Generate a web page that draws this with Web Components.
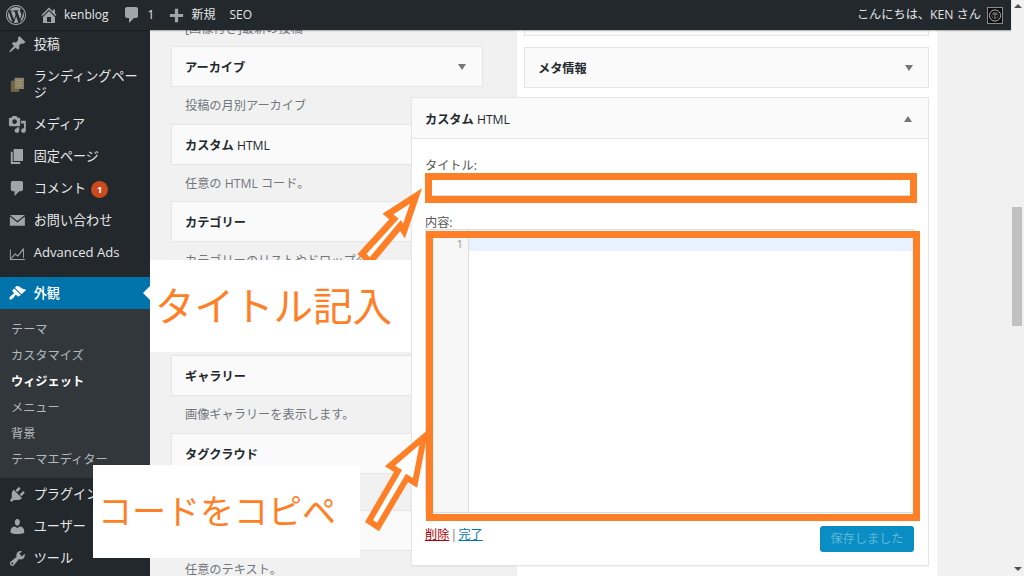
<!DOCTYPE html>
<html lang="ja">
<head>
<meta charset="utf-8">
<title>ウィジェット</title>
<style>
html,body{margin:0;padding:0;height:100%;overflow:hidden;background:#f1f1f1}
body{font-family:"Open Sans","Noto Sans CJK JP",sans-serif;font-size:12.2px;color:#444}
</style>
</head>
<body>
<wp-app>
  <wp-topbar slot="top"></wp-topbar>
  <wp-sidebar slot="side">
    <wp-menu-item icon="pin">投稿</wp-menu-item>
    <wp-menu-item icon="landing">ランディングページ</wp-menu-item>
    <wp-menu-item icon="media">メディア</wp-menu-item>
    <wp-menu-item icon="page">固定ページ</wp-menu-item>
    <wp-menu-item icon="comment" badge="1">コメント</wp-menu-item>
    <wp-menu-item icon="mail">お問い合わせ</wp-menu-item>
    <wp-menu-item icon="chart">Advanced Ads</wp-menu-item>
    <wp-menu-item icon="brush" active>外観</wp-menu-item>
    <wp-submenu>
      <wp-sub-item>テーマ</wp-sub-item>
      <wp-sub-item>カスタマイズ</wp-sub-item>
      <wp-sub-item current>ウィジェット</wp-sub-item>
      <wp-sub-item>メニュー</wp-sub-item>
      <wp-sub-item>背景</wp-sub-item>
      <wp-sub-item>テーマエディター</wp-sub-item>
    </wp-submenu>
    <wp-menu-item icon="plugin">プラグイン</wp-menu-item>
    <wp-menu-item icon="user">ユーザー</wp-menu-item>
    <wp-menu-item icon="tools">ツール</wp-menu-item>
  </wp-sidebar>
  <wp-widgets slot="main">
    <wp-available slot="left">
      <wp-widget-desc>[画像付き]最新の投稿</wp-widget-desc>
      <wp-widget-card>アーカイブ</wp-widget-card>
      <wp-widget-desc>投稿の月別アーカイブ</wp-widget-desc>
      <wp-widget-card>カスタム <wp-latin>HTML</wp-latin></wp-widget-card>
      <wp-widget-desc>任意の HTML コード。</wp-widget-desc>
      <wp-widget-card>カテゴリー</wp-widget-card>
      <wp-widget-desc>カテゴリーのリストやドロップダ</wp-widget-desc>
      <wp-widget-card></wp-widget-card>
      <wp-widget-desc></wp-widget-desc>
      <wp-widget-card>ギャラリー</wp-widget-card>
      <wp-widget-desc>画像ギャラリーを表示します。</wp-widget-desc>
      <wp-widget-card>タグクラウド</wp-widget-card>
      <wp-widget-desc></wp-widget-desc>
      <wp-widget-card></wp-widget-card>
      <wp-widget-desc>任意のテキスト。</wp-widget-desc>
    </wp-available>
    <wp-sidebar-area slot="right">
      <wp-widget-card stub></wp-widget-card>
      <wp-widget-card wide>メタ情報</wp-widget-card>
      <wp-widget-panel>カスタム <wp-latin>HTML</wp-latin></wp-widget-panel>
    </wp-sidebar-area>
  </wp-widgets>
  <wp-scrollbar slot="scroll"></wp-scrollbar>
  <wp-annotations slot="notes"></wp-annotations>
</wp-app>
<script>
const ICONS = {
  wp:'<path d="M20 10c0-5.52-4.48-10-10-10S0 4.48 0 10s4.48 10 10 10 10-4.48 10-10zM10 1.01c4.97 0 8.99 4.02 8.99 8.99s-4.02 8.99-8.99 8.99S1.01 14.97 1.01 10 5.03 1.01 10 1.01zM8.01 14.82L4.96 6.61c.49-.03 1.05-.08 1.05-.08.43-.05.38-1.01-.06-.99 0 0-1.29.1-2.13.1-.15 0-.33 0-.52-.01 1.44-2.17 3.9-3.6 6.7-3.6 2.09 0 3.99.79 5.41 2.09-.6-.08-1.45.35-1.45 1.42 0 .66.38 1.22.79 1.88.31.54.5 1.22.5 2.21 0 1.34-1.27 4.48-1.27 4.48l-2.71-7.5c.48-.03.75-.16.75-.16.43-.05.38-1.1-.05-1.08 0 0-1.3.11-2.14.11-.78 0-2.11-.11-2.11-.11-.43-.02-.48 1.06-.05 1.08l.84.08 1.12 3.04zm6.02 2.15L16.64 10s.67-1.69.39-3.81c.63 1.14.94 2.42.94 3.81 0 2.96-1.56 5.58-3.94 6.97zM2.68 6.77L6.5 17.25c-2.67-1.3-4.47-4.08-4.47-7.25 0-1.16.2-2.23.65-3.23zm7.45 4.53l2.29 6.25c-.75.27-1.57.42-2.42.42-.72 0-1.41-.11-2.06-.3z"/>',
  home:'<path d="M16 8.5l1.53 1.53-1.06 1.06L10 4.62l-6.47 6.47-1.06-1.06L10 2.5l4 4v-2h2v4zm-6-2.46l6 5.99V18H4v-5.97zM12 17v-5H8v5h4z"/>',
  plus:'<path d="M8.3 3h3.4v5.3H17v3.4h-5.3V17H8.3v-5.3H3V8.3h5.3z"/>',
  pin:'<path d="M10.44 3.02l1.82-1.82 6.36 6.35-1.83 1.82c-1.05-.68-2.48-.57-3.41.36l-.75.75c-.92.93-1.04 2.35-.35 3.41l-1.83 1.82-2.41-2.41-2.8 2.79c-.42.42-3.38 2.71-3.8 2.29s1.86-3.39 2.28-3.81l2.79-2.79L4.1 9.36l1.83-1.82c1.05.69 2.48.57 3.4-.36l.75-.75c.93-.92 1.05-2.35.36-3.41z"/>',
  landing:'<path fill="#6e6448" d="M3 6h9v12H3z"/><path fill="#8d8468" d="M7 3h10v12H7z"/><path fill="#a39a7e" d="M9 5h6v1H9zM9 8h6v1H9zM9 11h6v1H9z"/>',
  media:'<path d="M13 11V4c0-.55-.45-1-1-1h-1.67L9 1H5L3.67 3H2c-.55 0-1 .45-1 1v7c0 .55.45 1 1 1h10c.55 0 1-.45 1-1zM7 4.5c1.38 0 2.5 1.12 2.5 2.5S8.38 9.5 7 9.5 4.5 8.38 4.5 7 5.62 4.5 7 4.5zM14 6h5v10.5c0 1.38-1.12 2.5-2.5 2.5S14 17.88 14 16.5s1.12-2.5 2.5-2.5c.17 0 .34.02.5.05V9h-3V6zm-4 8.05V13h2v3.5c0 1.38-1.12 2.5-2.5 2.5S7 17.88 7 16.5 8.12 14 9.5 14c.17 0 .34.02.5.05z"/>',
  page:'<path d="M6 15V2h10v13H6zm-1 1h8v2H3V5h2v11z"/>',
  comment:'<path d="M5 2h9c1.1 0 2 .9 2 2v7c0 1.1-.9 2-2 2h-2l-5 5v-5H5c-1.1 0-2-.9-2-2V4c0-1.1.9-2 2-2z"/>',
  mail:'<path d="M2 4.2h16L10 10.6z"/><path d="M2 5.8v10h16v-10l-8 6.4z"/>',
  chart:'<path d="M2 18V7h1v10h15v1z"/><path d="M3 16l4.5-5 3 2L16 5.5l1 .7V16h-1V8l-5.3 6.6-3-2L4 16.7z"/>',
  brush:'<path d="M14.48 11.06L7.41 3.99l1.5-1.5c.5-.56 2.3-.47 3.51.32 1.21.8 1.43 1.28 2.91 2.1 1.18.64 2.45 1.26 4.45.85zm-.71.71L6.7 4.7 4.93 6.47c-.39.39-.39 1.02 0 1.41l1.06 1.06c.39.39.39 1.03 0 1.42-.6.6-1.43 1.11-2.21 1.69-.35.26-.7.53-1.01.84-1.35 1.35-1.6 2.76-.96 3.4.64.64 2.05.39 3.4-.96.31-.31.58-.66.84-1.01.58-.78 1.09-1.61 1.69-2.21.39-.39 1.03-.39 1.42 0l1.06 1.06c.39.39 1.02.39 1.41 0z"/>',
  plugin:'<path d="M13.11 4.36L9.87 7.6 8 5.73l3.24-3.24c.35-.34 1.05-.2 1.56.32.52.51.66 1.21.31 1.55zm-8 1.77l.91-1.12 9.01 9.01-1.19.84c-.71.71-2.63 1.16-3.82 1.16H6.14L4.9 17.26c-.59.59-1.54.59-2.12 0-.59-.58-.59-1.53 0-2.12l1.24-1.24v-3.88c0-1.13.4-3.19 1.09-3.89zm7.26 3.97l3.24-3.24c.34-.35 1.04-.21 1.55.31.52.51.66 1.21.31 1.55l-3.24 3.25z"/>',
  user:'<path d="M10 9.25c-2.27 0-2.73-3.44-2.73-3.44C7 4.02 7.82 2 9.97 2c2.16 0 2.98 2.02 2.71 3.81 0 0-.41 3.44-2.68 3.44zm0 2.57L12.72 10c2.39 0 4.52 2.33 4.52 4.53v2.49s-3.65 1.13-7.24 1.13c-3.65 0-7.24-1.13-7.24-1.13v-2.49c0-2.25 1.94-4.48 4.47-4.48z"/>',
  tools:'<path d="M16.68 9.77c-1.34 1.34-3.3 1.67-4.95.99l-5.41 6.52c-.99.99-2.59.99-3.58 0s-.99-2.59 0-3.57l6.52-5.42c-.68-1.65-.35-3.61.99-4.95 1.28-1.28 3.12-1.62 4.72-1.06l-2.89 2.89 2.82 2.82 2.86-2.87c.53 1.58.18 3.39-1.08 4.65zM3.81 16.21c.4.39 1.04.39 1.43 0 .4-.4.4-1.04 0-1.43-.39-.4-1.03-.4-1.43 0-.39.39-.39 1.03 0 1.43z"/>'
};
const svgIcon = (n, s, c) => `<svg width="${s}" height="${s}" viewBox="0 0 20 20" fill="${c}" aria-hidden="true">${ICONS[n]}</svg>`;

class Base extends HTMLElement {
  constructor(){ super(); this.attachShadow({mode:'open'}); }
  connectedCallback(){ this.shadowRoot.innerHTML = this.render(); }
}
const FONT = `"Open Sans","Noto Sans CJK JP",sans-serif`;

customElements.define('wp-app', class extends Base { render(){ return `<style>
  :host{display:grid;grid-template-columns:150px 1fr 13px;grid-template-rows:30px 1fr;width:1024px;height:576px;position:relative;overflow:hidden;background:#f1f1f1;font-family:${FONT}}
  .top{grid-column:1/3;grid-row:1;z-index:5;display:block}
  .side{grid-column:1;grid-row:2;overflow:hidden;background:#23282d;position:relative}
  .main{grid-column:2;grid-row:2;overflow:hidden}
  .scroll{grid-column:3;grid-row:1/3}
  </style>
  <div class="top"><slot name="top"></slot></div>
  <div class="side"><slot name="side"></slot></div>
  <div class="main"><slot name="main"></slot></div>
  <div class="scroll"><slot name="scroll"></slot></div>
  <slot name="notes"></slot>`; } });

customElements.define('wp-topbar', class extends Base { render(){ return `<style>
  :host{display:flex;align-items:center;height:30px;background:#23282d;color:#e4e5e6;font-size:12px;box-shadow:0 1px 1px rgba(0,0,0,.25)}
  svg{display:block;flex:none}
  span{white-space:nowrap;line-height:14px}
  .logo{margin-left:6px}
  .home{margin-left:13px}
  .name{margin-left:5px}
  .cm{margin-left:13px}
  .cn{margin-left:6px}
  .plus{margin-left:13px}
  .new{margin-left:5px}
  .seo{margin-left:14px}
  .hi{margin-left:auto;font-size:12.2px}
  .av{margin:0 8px 0 6px}
  </style>
  <span class="logo">${svgIcon('wp',20,'#a0a5aa')}</span>
  <span class="home">${svgIcon('home',20,'#a0a5aa')}</span>
  <span class="name">kenblog</span>
  <span class="cm">${svgIcon('comment',20,'#a0a5aa')}</span>
  <span class="cn">1</span>
  <span class="plus">${svgIcon('plus',19,'#a0a5aa')}</span>
  <span class="new">新規</span>
  <span class="seo">SEO</span>
  <span class="hi">こんにちは、KEN さん</span>
  <svg class="av" width="16" height="17" viewBox="0 0 16 17" aria-hidden="true"><rect width="16" height="17" fill="#0c0c0c"/><rect x=".5" y=".5" width="15" height="16" fill="none" stroke="#8a8a8a"/><circle cx="8" cy="8.5" r="5.6" fill="none" stroke="#b5b5b5"/><circle cx="8" cy="8.5" r="3.2" fill="none" stroke="#555"/><path d="M6 7h4M8 7v4" stroke="#999"/></svg>`; } });

customElements.define('wp-sidebar', class extends Base { render(){ return `<style>
  :host{display:flex;flex-direction:column;margin-top:-2px;color:#eee;font-size:13.1px}
  </style><slot></slot>`; } });

customElements.define('wp-menu-item', class extends Base { render(){
  const act = this.hasAttribute('active');
  const badge = this.getAttribute('badge');
  const ic = this.getAttribute('icon');
  return `<style>
  :host{display:flex;align-items:center;flex:none;min-height:32px;background:${act?'#0073aa':'transparent'};color:${act?'#fff':'#e6e7e8'};position:relative;${act?'margin-top:9px;':''}}
  .i{flex:none;width:33.75px;display:flex;justify-content:center}
  .t{flex:1;padding:8px 8px 8px 0;line-height:16px;display:flow-root;${act?'font-weight:500;':''}}
  .b{display:inline-block;width:17px;height:17px;border-radius:50%;background:#ca4a1f;color:#fff;font-size:9.5px;font-weight:700;line-height:17px;text-align:center;margin:-4px 0 -4px 5px;vertical-align:middle}
  .n{position:absolute;right:0;top:9px;width:0;height:0;border:7px solid transparent;border-right-color:#fff;border-left:0}
  </style>
  <div class="i">${svgIcon(ic,18.75,act?'#fff':'#a0a5aa')}</div>
  <div class="t"><slot></slot>${badge?`<span class="b">${badge}</span>`:''}</div>
  ${act?'<div class="n"></div>':''}`; } });

customElements.define('wp-submenu', class extends Base { render(){ return `<style>
  :host{display:flex;flex-direction:column;flex:none;height:169px;box-sizing:border-box;padding:7.5px 0 5.5px 11px;background:#32373c;font-size:12.2px}
  </style><slot></slot>`; } });

customElements.define('wp-sub-item', class extends Base { render(){ const c=this.hasAttribute('current'); return `<style>
  :host{display:block;height:26px;line-height:26px;white-space:nowrap;color:${c?'#fff':'#b4b9be'};font-weight:${c?700:400}}
  </style><slot></slot>`; } });

customElements.define('wp-widgets', class extends Base { render(){ return `<style>
  :host{display:grid;grid-template-columns:367px 420px 1fr;height:100%}
  .r{position:relative;z-index:1;background:#fff;padding:0 8px 0 7px;min-height:100%}
  </style>
  <div><slot name="left"></slot></div>
  <div class="r"><slot name="right"></slot></div>
  <div></div>`; } });

customElements.define('wp-available', class extends Base { render(){ return `<style>
  :host{display:flex;flex-direction:column;width:312px;margin:-20px 0 0 21px}
  </style><slot></slot>`; } });

customElements.define('wp-latin', class extends Base { render(){ return `<style>
  :host{display:inline;font-weight:500}
  </style><slot></slot>`; } });

customElements.define('wp-widget-desc', class extends Base { render(){ return `<style>
  :host{display:flex;align-items:center;flex:none;box-sizing:border-box;height:36.25px;padding:2px 0 0 14px;line-height:14px;color:#72777c;font-size:12.2px;white-space:nowrap}
  </style><slot></slot>`; } });

customElements.define('wp-widget-card', class extends Base { render(){
  const stub=this.hasAttribute('stub');
  return `<style>
  :host{display:flex;align-items:center;justify-content:space-between;flex:none;box-sizing:border-box;height:${stub?'6px':'41px'};padding:1px ${this.hasAttribute('wide')?'15px':'16px'} 0 13px;background:#fafafa;border:1px solid #e5e5e5;${stub?'border-top:0;margin-bottom:11px;':''}color:#23282d;font-size:12.2px;font-weight:700;${this.hasAttribute('wide')?'margin-bottom:9px;':''}}
  .a{width:0;height:0;border:4.5px solid transparent;border-top:6px solid #72777c;border-bottom:0}
  </style>
  <div><slot></slot></div>${stub?'':'<div class="a"></div>'}`; } });

customElements.define('wp-sidebar-area', class extends Base { render(){ return `<style>
  :host{display:flex;flex-direction:column}
  </style><slot></slot>`; } });

customElements.define('wp-widget-panel', class extends Base { render(){ return `<style>
  :host{display:flex;flex-direction:column;flex:none;box-sizing:border-box;margin-left:-113px;height:469px;background:#fff;border:1px solid #e5e5e5;box-shadow:0 1px 1px rgba(0,0,0,.04);font-size:12.2px}
  .h{display:flex;align-items:center;justify-content:space-between;flex:none;height:41px;box-sizing:border-box;padding:1px 16px 0 13px;background:#fafafa;border-bottom:1px solid #e5e5e5;color:#23282d;font-weight:700}
  .a{width:0;height:0;border:4.5px solid transparent;border-bottom:6px solid #72777c;border-top:0}
  .b{display:flex;flex-direction:column;flex:1;padding:17px 14px 13px 13px;color:#555}
  label{display:block;height:19px;line-height:19px}
  input{display:block;box-sizing:border-box;width:100%;height:21px;margin:0 0 17px;border:1px solid #ddd;background:#fff;padding:0}
  .ed{display:grid;grid-template-columns:43px 1fr;grid-template-rows:21px 1fr;box-sizing:border-box;height:284px;border:1px solid #ddd;margin-top:-3px}
  .g{grid-row:1/3;background:#f7f7f7;border-right:1px solid #ddd;text-align:right;padding:7px 5px 0 0;color:#999;font-size:11.5px;line-height:14px}
  .l{background:#e8f2ff;margin-top:7px;height:14px}
  .f{display:flex;justify-content:space-between;align-items:flex-start;margin-top:14px}
  .links{line-height:16px;color:#72777c;word-spacing:-2px}
  .del{color:#a00;text-decoration:underline}
  .ok{color:#0073aa;text-decoration:underline}
  .s{display:block;width:94px;height:26px;line-height:26px;text-align:center;background:#0a8dc2;border-radius:3px;color:#5cb9dc;margin-top:-1px}
  </style>
  <div class="h"><div><slot></slot></div><div class="a"></div></div>
  <div class="b">
    <label>タイトル:</label>
    <input type="text" aria-label="タイトル">
    <label>内容:</label>
    <div class="ed"><div class="g">1</div><div class="l"></div><div></div></div>
    <div class="f"><div class="links"><span class="del">削除</span> | <span class="ok">完了</span></div><div class="s">保存しました</div></div>
  </div>`; } });

customElements.define('wp-scrollbar', class extends Base { render(){ return `<style>
  :host{display:flex;flex-direction:column;align-items:center;height:576px;background:#f1f1f1;position:relative}
  .u{width:0;height:0;margin-top:4px;border:4px solid transparent;border-bottom:4px solid #505050;border-top:0}
  .t{width:10px;height:119px;margin:199px 0 0 -1px;background:#c1c1c1}
  .d{width:0;height:0;margin-top:auto;margin-bottom:5px;border:4px solid transparent;border-top:4px solid #505050;border-bottom:0}
  </style><div class="u"></div><div class="t"></div><div class="d"></div>`; } });

customElements.define('wp-annotations', class extends Base { render(){ return `<style>
  :host{position:absolute;inset:0;z-index:10;pointer-events:none;font-family:"Noto Sans CJK JP",sans-serif;color:#ff7f27}
  svg{position:absolute;left:0;top:0}
  .rect{position:absolute;box-sizing:border-box;border:7px solid #ff7f27}
  .note{position:absolute;background:#fff;display:flex;align-items:center;white-space:nowrap;box-sizing:border-box;font-weight:400;line-height:1}
  </style>
  <svg width="1024" height="576" aria-hidden="true"><polygon points="416,196 388,214 394,219 362,254 370,262 400.5,225.5 404,231" fill="#fff" stroke="#ff7f27" stroke-width="6.5" stroke-linejoin="miter" stroke-miterlimit="8"/></svg>
  <div class="rect" style="left:425px;top:173px;width:492px;height:30px"></div>
  <div class="rect" style="left:426px;top:231px;width:494px;height:290px"></div>
  <div class="note" style="left:150px;top:260px;width:261px;height:92px;padding:0 0 5px 5px;font-size:39.5px">タイトル記入</div>
  <div class="note" style="left:93px;top:465px;width:267px;height:93px;padding:0 0 3px 5px;font-size:34px">コードをコピペ</div>
  <svg width="1024" height="576" aria-hidden="true"><polygon points="424,437 390,466 398,471 369,521 378,527 407,478 415,483" fill="#fff" stroke="#ff7f27" stroke-width="6" stroke-linejoin="miter" stroke-miterlimit="8"/></svg>`; } });
</script>
</body>
</html>
